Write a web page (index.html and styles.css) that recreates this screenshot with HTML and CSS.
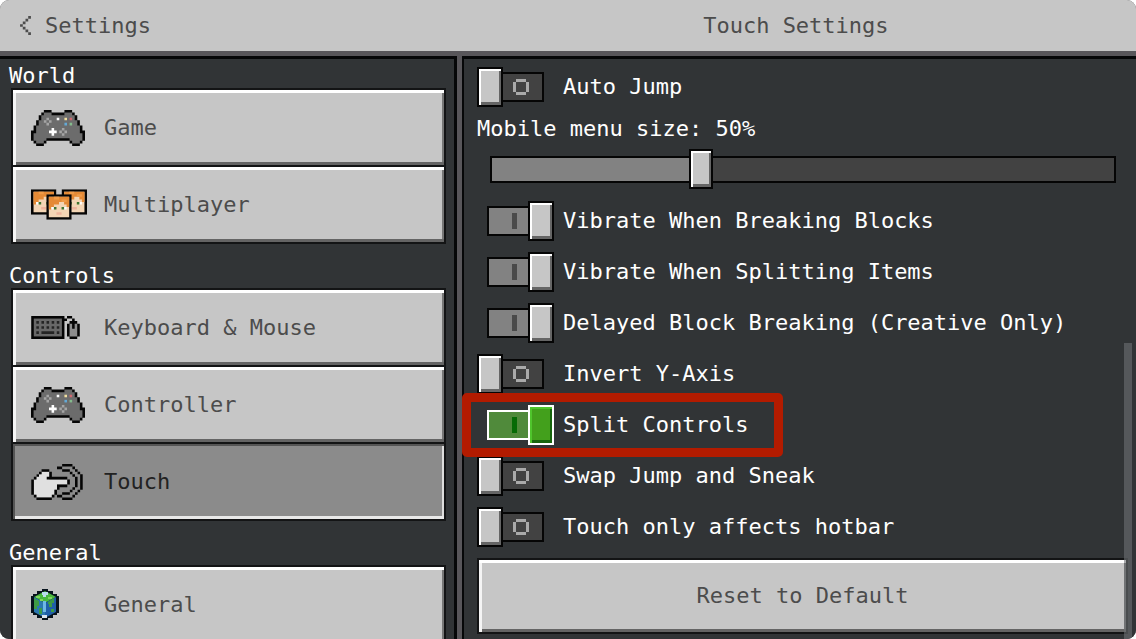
FILE: index.html
```html
<!DOCTYPE html>
<html lang="en">
<head>
<meta charset="utf-8">
<title>Touch Settings</title>
<link rel="stylesheet" href="styles.css">
</head>
<body>
<svg class="defs" aria-hidden="true">
  <symbol id="pad" viewBox="0 0 21 14">
    <path fill="#050505" d="M5 0h3v1h5V0h3v1h1v1h1v2h1v2h1v2h1v4h-1v1h-1v1h-3v-1h-1v-1H6v1H5v1H2v-1H1v-1H0V8h1V6h1V4h1V2h1V1h1z"/>
    <path fill="#6c6c6c" d="M5 1h3v1h5V1h3v1h1v2h1v2h1v3h1v3h-1v1h-3v-1h-1v-1H6v1H5v1H2v-1H1V9h1V6h1V4h1V2h1z"/>
    <path fill="#a5a5a5" d="M6 3h1v1H6zM5 4h1v1H5zM7 4h1v1H7zM6 5h1v1H6zM12 7h1v1h-1zM11 8h1v1h-1zM13 8h1v1h-1zM12 9h1v1h-1z"/>
    <path fill="#fff" d="M10 3h1v1h-1zM8 7h1v1h1v1H9v1H8V9H7V8h1z"/>
    <path fill="#f1dfa0" d="M13 3h1v1h-1z"/><path fill="#cf6870" d="M15 3h1v1h-1z"/>
    <path fill="#63a9d6" d="M13 5h1v1h-1z"/><path fill="#84bb8c" d="M15 5h1v1h-1z"/>
  </symbol>
  <symbol id="face" viewBox="0 0 10 10">
    <path fill="#050505" d="M0 0h10v10H0z"/>
    <path fill="#f3d5b5" d="M1 1h8v8H1z"/>
    <path fill="#e58a35" d="M1 1h8v4H8V4H7V3H5v1H3v1H2v1H1z"/>
    <path fill="#f09b48" d="M3 1h2v1H3zM6 2h2v1H6z"/>
    <path fill="#fff" d="M2 5h1v1H2zM7 5h1v1H7z"/>
    <path fill="#3f7430" d="M3 5h1v1H3zM6 5h1v1H6z"/>
    <path fill="#eeb49d" d="M4 7h2v1H4z"/>
  </symbol>
</svg>

<header class="topbar">
  <button class="back" type="button">
    <svg class="chevron" viewBox="0 0 4 7" aria-hidden="true"><path d="M3 0h1v1H3zM2 1h1v1H2zM1 2h1v1H1zM0 3h1v1H0zM1 4h1v1H1zM2 5h1v1H2zM3 6h1v1H3z"/></svg>
    Settings
  </button>
  <h1 class="title">Touch Settings</h1>
</header>

<div class="screen">
  <nav class="sidebar" aria-label="Settings sections">
    <section class="group">
      <h2 class="group-title">World</h2>
      <button class="item" type="button"><span class="icon"><svg class="i-pad"><use href="#pad"/></svg></span>Game</button>
      <button class="item" type="button"><span class="icon">
        <svg class="i-faces" viewBox="0 0 22 12"><use href="#face" width="10" height="10"/><use href="#face" x="12" width="10" height="10"/><use href="#face" x="6" y="2" width="10" height="10"/></svg>
      </span>Multiplayer</button>
    </section>
    <section class="group">
      <h2 class="group-title">Controls</h2>
      <button class="item" type="button"><span class="icon">
        <svg class="i-keys" viewBox="0 0 19 9">
          <path fill="#050505" d="M0 0h13v9H0zM13 1h1V0h2v1h1v1h1v1h1v5h-1v1h-3V8h-1V3h1V2h1V1h-2v1h-1z"/>
          <path fill="#686868" d="M1 1h11v7H1z"/>
          <path fill="#8d8d8d" d="M15 3h1v2h1V3h1v5h-3z"/>
          <path fill="#242424" d="M2 2h1v1H2zM4 2h1v1H4zM6 2h1v1H6zM8 2h1v1H8zM10 2h1v1h-1zM2 4h1v1H2zM4 4h1v1H4zM6 4h1v1H6zM8 4h1v1H8zM10 4h1v1h-1zM2 6h1v1H2zM4 6h5v1H4zM10 6h1v1h-1z"/>
        </svg>
      </span>Keyboard &amp; Mouse</button>
      <button class="item" type="button"><span class="icon"><svg class="i-pad"><use href="#pad"/></svg></span>Controller</button>
      <button class="item selected" type="button" aria-current="page"><span class="icon">
        <svg class="i-touch" viewBox="0 0 20 14">
          <path fill="#e0e0e0" d="M4 3h3v3h7v2h-4v2H9v2H8v1H2v-1H1V6h1V4h2z"/>
          <path fill="#050505" d="M4 2h3v1H4zM3 3h1v1H3zM7 3h1v2h6v1H6V5h1zM2 4h1v1H2zM1 5h1v1H1zM0 6h1v6H0zM14 6h1v2h-1zM10 8h4v1h-3v1h-1zM9 10h1v2H9zM8 12h1v1H8zM1 12h1v1H1zM2 13h6v1H2z"/>
          <path fill="#050505" d="M12 0h4v1h-4zM10 1h2v1h-2zM16 1h1v1h-1zM17 2h1v1h-1zM18 3h1v1h-1zM19 4h1v6h-1zM18 10h1v1h-1zM17 11h1v1h-1zM16 12h1v1h-1zM12 13h4v1h-4zM10 12h2v1h-2zM12 2h3v1h-3zM15 3h1v1h-1zM16 4h1v1h-1zM17 5h1v4h-1zM16 9h1v1h-1zM15 10h1v1h-1zM12 11h3v1h-3z"/>
        </svg>
      </span>Touch</button>
    </section>
    <section class="group">
      <h2 class="group-title">General</h2>
      <button class="item" type="button"><span class="icon">
        <svg class="i-globe" viewBox="0 0 28 31">
          <path fill="#07131c" d="M11 0h6v2h5v3h4v2h2v17h-2v2h-4v3h-5v2h-6v-2H6v-3H2v-2H0V7h2V5h4V2h5z"/>
          <path fill="#48b83c" d="M14 2l11 6-11 6L3 8z"/>
          <path fill="#2b78b0" d="M3 8l11 6v15L3 23z"/>
          <path fill="#1f5fa8" d="M25 8l-11 6v15l11-6z"/>
          <path fill="#b9dcec" d="M11 3h6v3h-2v2h-3V6h-1z"/>
          <path fill="#7fd35a" d="M5 7h4v2H5zM17 8h4v2h-4zM9 10h3v2H9z"/>
          <path fill="#3d9a45" d="M3 9l5 3v5H6v3H3zM8 19h3v6H8zM17 13l6-4v5h-2v4h-3v-3h-1zM20 20h3v3h-3z"/>
          <path fill="#6db8e4" d="M12 12h3v11h-3z"/>
          <path fill="#d9e5ee" d="M11 26h5v3h-5z"/>
        </svg>
      </span>General</button>
    </section>
  </nav>

  <main class="panel">
    <label class="row"><input class="toggle" type="checkbox">Auto Jump</label>
    <label class="slider-label" for="menu-size">Mobile menu size: 50%</label>
    <input class="slider" id="menu-size" type="range" min="0" max="100" value="33" aria-valuetext="50%">
    <label class="row"><input class="toggle" type="checkbox" checked>Vibrate When Breaking Blocks</label>
    <label class="row"><input class="toggle" type="checkbox" checked>Vibrate When Splitting Items</label>
    <label class="row"><input class="toggle" type="checkbox" checked>Delayed Block Breaking (Creative Only)</label>
    <label class="row"><input class="toggle" type="checkbox">Invert Y-Axis</label>
    <label class="row marked"><input class="toggle active" type="checkbox" checked>Split Controls</label>
    <label class="row"><input class="toggle" type="checkbox">Swap Jump and Sneak</label>
    <label class="row"><input class="toggle" type="checkbox">Touch only affects hotbar</label>
    <button class="reset" type="button">Reset to Default</button>
    <div class="scrollbar"></div>
  </main>
</div>
</body>
</html>
```

FILE: styles.css
```css
*, *::before, *::after { box-sizing: border-box; }

html { background: #fff; }

body {
  margin: 0;
  height: 100vh;
  display: flex;
  flex-direction: column;
  overflow: hidden;
  border-radius: 9px;
  background: #58565a;
  color: #fff;
  font: 22px/24px "DejaVu Sans Mono", "Liberation Mono", monospace;
}

button { font: inherit; color: #4c4c4c; cursor: pointer; }
svg { display: block; }
.defs { position: absolute; width: 0; height: 0; }

.topbar {
  flex: none;
  display: grid;
  grid-template-columns: 41% 1fr;
  align-items: center;
  height: 51px;
  background: #c6c6c6;
  color: #4c4c4c;
}

.back {
  display: flex;
  align-items: center;
  gap: 14px;
  padding: 0 20px;
  border: 0;
  background: none;
}

.chevron { width: 11px; height: 19px; fill: #4c4c4c; }

.title {
  margin: 0;
  padding-right: 10px;
  font: inherit;
  text-align: center;
}

.screen {
  flex: 1;
  min-height: 0;
  display: grid;
  grid-template-columns: 457px 1fr;
  gap: 5px;
  padding-top: 5px;
}

.sidebar, .panel {
  min-height: 0;
  background: #313436;
  border-top: 3px solid #060708;
}

.sidebar {
  padding: 5px 8px 0 11px;
  border-right: 3px solid #060708;
  overflow: hidden;
}

.group { display: flex; flex-direction: column; margin-bottom: 22px; }

.group-title { margin: 0; margin-left: -2px; font: inherit; }

.item, .reset {
  background: #c6c6c6;
  border: 2px solid #131415;
  box-shadow: inset 0 3px #fff, inset 3px 0 #f4f4f4, inset 0 -3px #646464, inset -2px 0 #777;
}

.item {
  display: flex;
  align-items: center;
  height: 79px;
  margin-bottom: -2px;
  padding: 0 18px;
  text-align: left;
}

.icon { flex: none; width: 73px; }

.selected {
  background: #8b8b8b;
  color: #222;
  box-shadow: inset 0 2px #555, inset 2px 0 #555, inset 0 -3px #e8e8e8, inset -2px 0 #ddd;
}

.i-pad { width: 54px; height: 36px; }
.i-faces { width: 56px; height: 31px; }
.i-keys { width: 49px; height: 23px; }
.i-touch { width: 52px; height: 36px; }
.i-globe { width: 28px; height: 31px; }

.panel {
  position: relative;
  display: flex;
  flex-direction: column;
  align-items: flex-start;
  padding: 2px 8px 0 13px;
  border-left: 2px solid #060708;
}

.row {
  flex: none;
  position: relative;
  display: flex;
  align-items: center;
  gap: 9px;
  height: 51px;
}

.toggle {
  appearance: none;
  position: relative;
  display: block;
  width: 77px;
  height: 40px;
  margin: 0;
  padding: 5px 10px;
}

.toggle::before {
  content: "";
  display: block;
  height: 30px;
  border: 2px solid #050505;
  background:
    linear-gradient(#aaa, #aaa) 27px 5px / 10px 3px no-repeat,
    linear-gradient(#aaa, #aaa) 27px 18px / 10px 3px no-repeat,
    linear-gradient(#aaa, #aaa) 24px 8px / 3px 10px no-repeat,
    linear-gradient(#aaa, #aaa) 37px 8px / 3px 10px no-repeat,
    #424242;
}

.toggle::after {
  content: "";
  position: absolute;
  top: 0;
  left: 0;
  width: 26px;
  height: 40px;
  background: #c6c6c6;
  border: 2px solid #050505;
  box-shadow: inset 2px 2px #fff, inset -2px -3px #656565;
}

.toggle:checked::before {
  background: linear-gradient(#4a4a4a, #4a4a4a) 23px 5px / 5px 16px no-repeat, #828282;
}

.toggle:checked::after { left: auto; right: 0; }

.toggle.active::before {
  border-color: #fff;
  background: linear-gradient(#066b05, #066b05) 23px 5px / 5px 16px no-repeat, #508a3b;
}

.toggle.active::after {
  border-color: #fff;
  background: #43a01c;
  box-shadow: inset 2px 2px #4fc52c, inset -2px -3px #17650d;
}

.marked { z-index: 1; }

.marked::after {
  content: "";
  position: absolute;
  inset: -6px -35px -7px -15px;
  border: 9px solid #b31b00;
  border-radius: 5px;
  pointer-events: none;
}

.slider-label { height: 34px; line-height: 34px; }

.slider {
  appearance: none;
  flex: none;
  align-self: stretch;
  height: 40px;
  margin: 3px 12px 6px 13px;
  background: none;
}

.slider::-webkit-slider-runnable-track {
  height: 27px;
  border: 2px solid #050505;
  background: linear-gradient(to right, #828282 34%, #424242 34%);
}

.slider::-webkit-slider-thumb {
  appearance: none;
  width: 24px;
  height: 40px;
  margin-top: -9px;
  background: #c6c6c6;
  border: 2px solid #050505;
  box-shadow: inset 2px 2px #fff, inset -2px -3px #656565;
}

.reset {
  flex: none;
  align-self: stretch;
  height: 76px;
  margin-top: 6px;
}

.scrollbar {
  position: absolute;
  right: 4px;
  bottom: 0;
  width: 8px;
  height: 51%;
  background: rgba(110, 114, 116, 0.6);
}
```
